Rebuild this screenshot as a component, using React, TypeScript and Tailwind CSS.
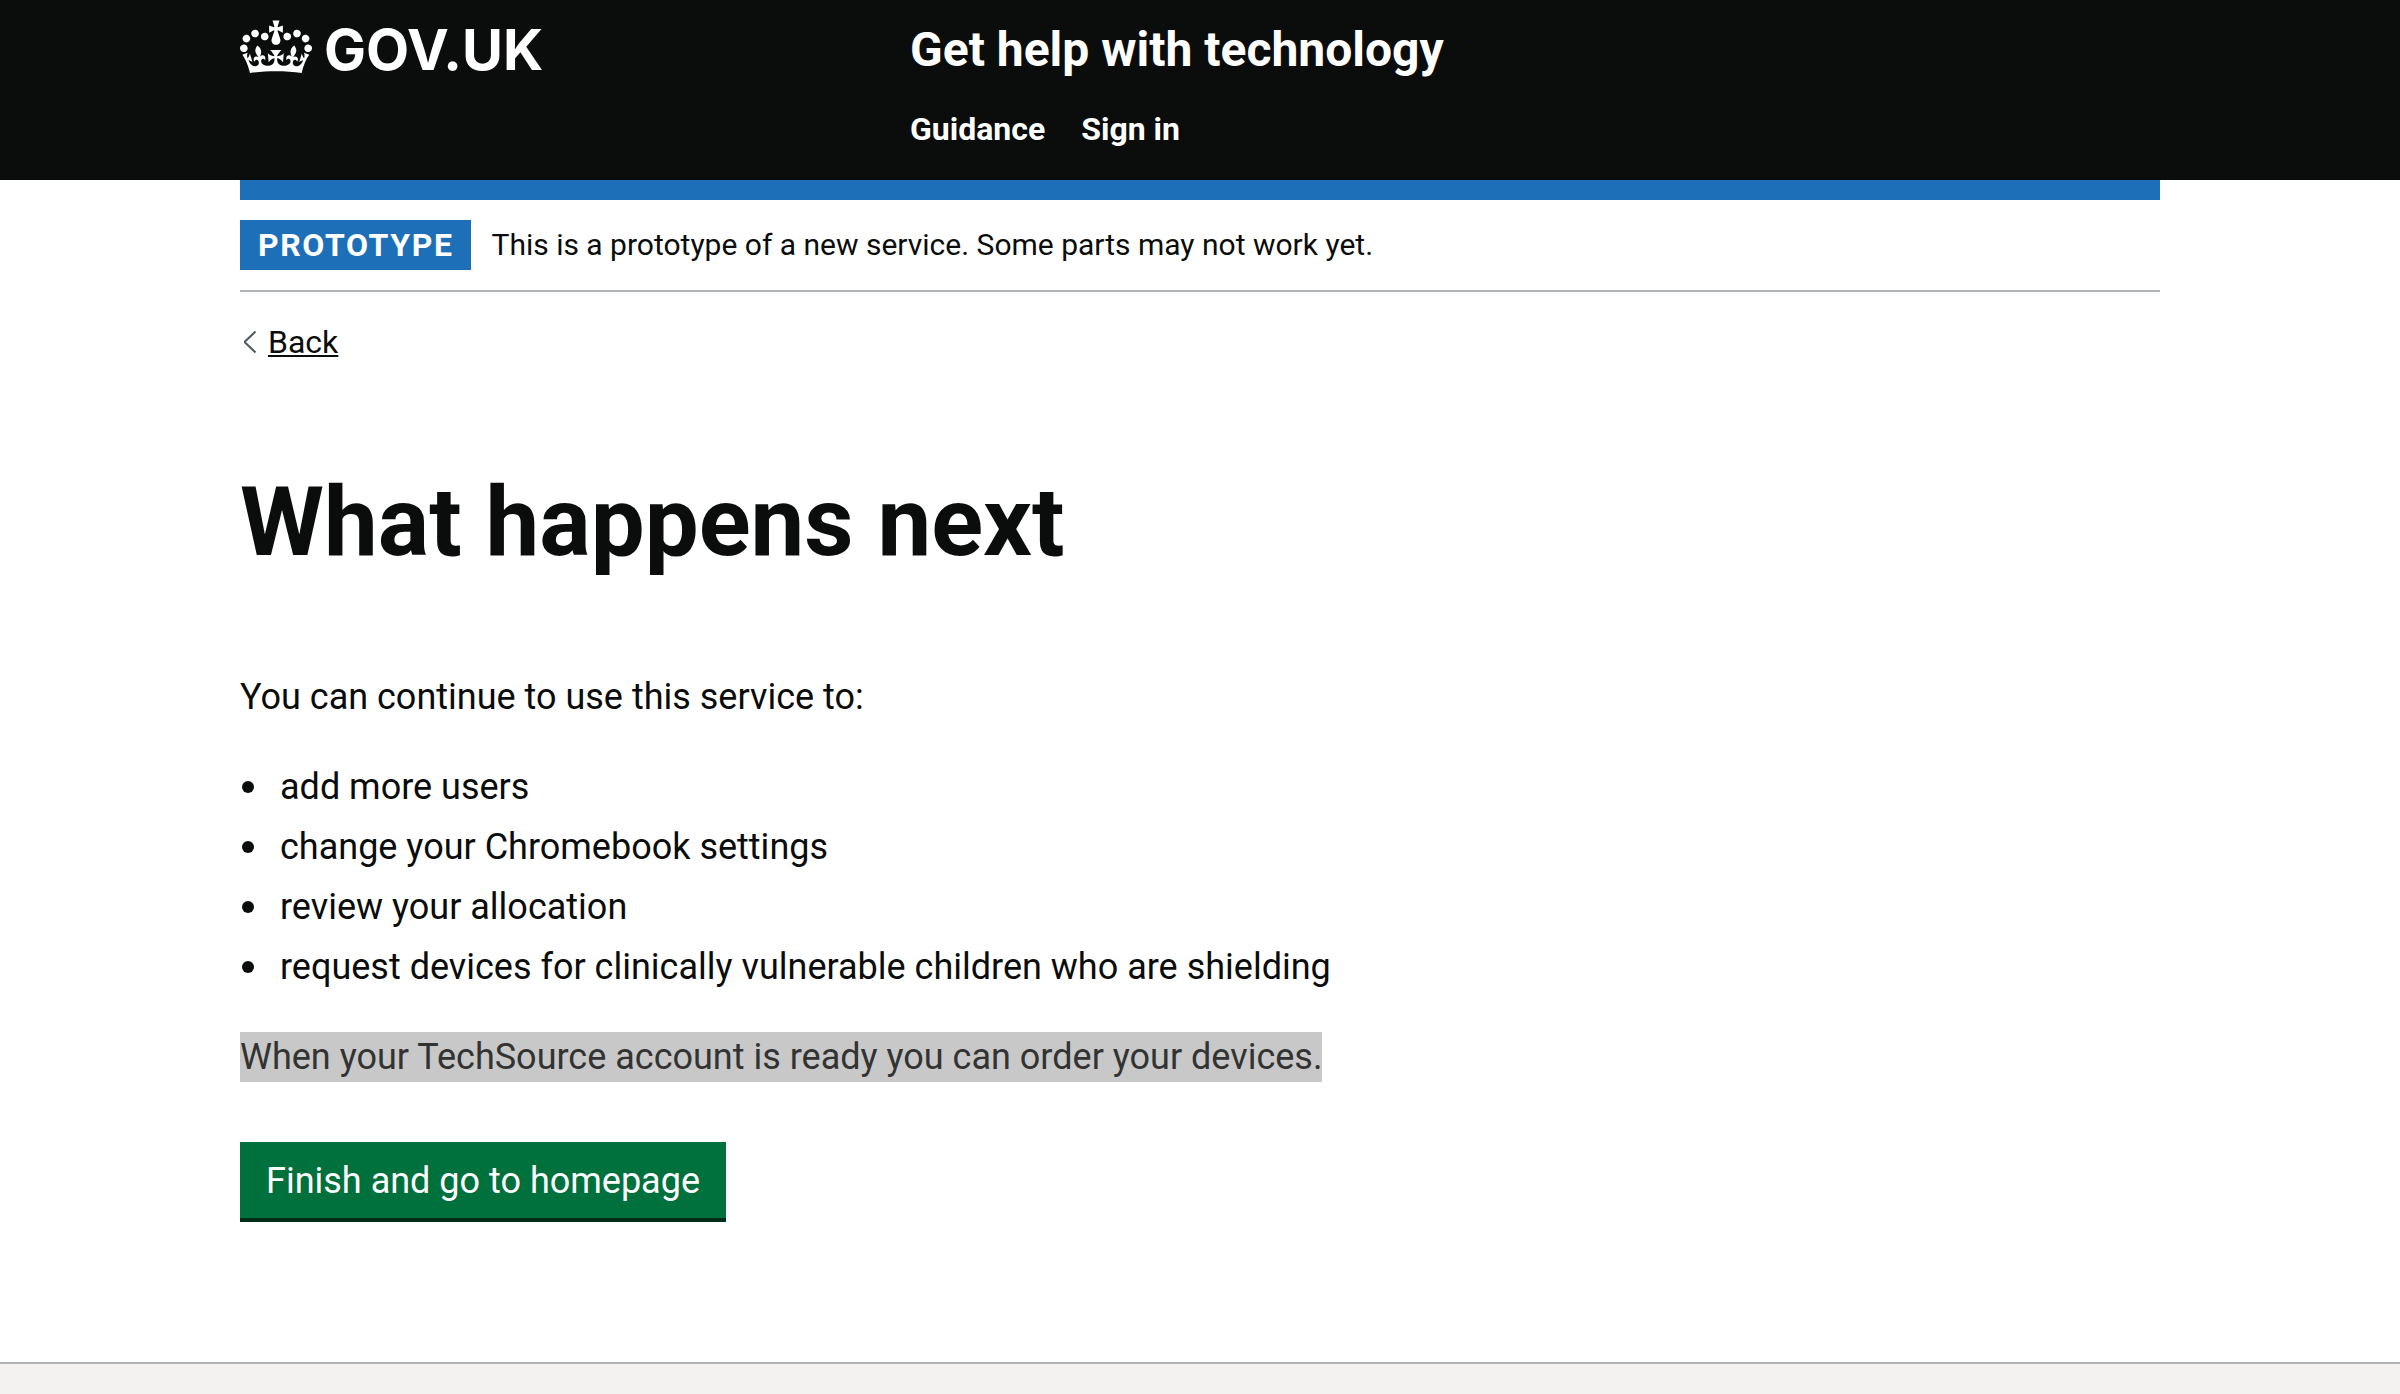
const CROWN =
  'M25 30.2c3.5 1.5 7.7-.2 9.1-3.7 1.5-3.6-.2-7.8-3.9-9.2-3.6-1.4-7.6.3-9.1 3.9-1.4 3.5.3 7.5 3.9 9zM9 39.5c3.6 1.5 7.8-.2 9.2-3.7 1.5-3.6-.2-7.8-3.9-9.1-3.6-1.5-7.6.2-9.1 3.8-1.4 3.5.3 7.5 3.8 9zM4.4 57.2c3.5 1.5 7.7-.2 9.1-3.8 1.5-3.6-.2-7.7-3.9-9.1-3.5-1.5-7.6.3-9.1 3.8-1.4 3.5.3 7.6 3.9 9.1zm38.3-21.4c3.5 1.5 7.7-.2 9.1-3.8 1.5-3.6-.2-7.7-3.9-9.1-3.6-1.5-7.6.3-9.1 3.8-1.3 3.6.4 7.7 3.9 9.1zm64.4-5.6c-3.6 1.5-7.8-.2-9.1-3.7-1.5-3.6.2-7.8 3.8-9.2 3.6-1.4 7.7.3 9.2 3.9 1.3 3.5-.4 7.5-3.9 9zm15.9 9.3c-3.6 1.5-7.7-.2-9.1-3.7-1.5-3.6.2-7.8 3.7-9.1 3.6-1.5 7.7.2 9.2 3.8 1.5 3.5-.3 7.5-3.8 9zm4.7 17.7c-3.6 1.5-7.8-.2-9.2-3.8-1.5-3.6.2-7.7 3.9-9.1 3.6-1.5 7.7.3 9.2 3.8 1.3 3.5-.4 7.6-3.9 9.1zM89.3 35.8c-3.6 1.5-7.8-.2-9.2-3.8-1.4-3.6.2-7.7 3.9-9.1 3.6-1.5 7.7.3 9.2 3.8 1.4 3.6-.3 7.7-3.9 9.1zM69.7 17.7l8.9 4.7V9.3l-8.9 2.8c-.2-.3-.5-.6-.9-.9L72.4 0H59.6l3.5 11.2c-.3.3-.6.5-.9.9l-8.8-2.8v13.1l8.8-4.7c.3.3.6.7.9.9l-5 15.4v.1c-.2.8-.4 1.6-.4 2.4 0 4.1 3.1 7.5 7 8.1h.2c.3 0 .7.1 1 .1.4 0 .7 0 1-.1h.2c4-.6 7.1-4.1 7.1-8.1 0-.8-.1-1.7-.4-2.4V34l-5.1-15.4c.4-.2.7-.6 1-.9zM66 92.8c16.9 0 32.8 1.1 47.1 3.2 4-16.9 8.9-26.7 14-33.5l-9.6-3.4c1 4.9 1.1 7.2 0 10.2-1.5-1.4-3-4.3-4.2-8.7L108.6 76c2.8-2 5-3.2 7.5-3.3-4.4 9.4-10 11.9-13.6 11.2-4.3-.8-6.3-4.6-5.6-7.9 1-4.7 5.7-5.9 8-.5 4.3-8.7-3-11.4-7.6-8.8 7.1-7.2 7.9-13.5 2.1-21.1-8 6.1-8.1 12.3-4.5 20.8-4.7-5.4-12.1-2.5-9.5 6.2 3.4-5.2 7.9-2 7.2 3.1-.6 4.3-6.4 7.8-13.5 7.2-10.3-.9-10.9-8-11.2-13.8 2.5-.5 7.1 1.8 11 7.3L80.2 60c-4.1 4.4-8 5.3-12.3 5.4 1.4-4.4 8-11.6 8-11.6H55.5s6.4 7.2 7.9 11.6c-4.2-.1-8-1-12.3-5.4l1.4 16.4c3.9-5.5 8.5-7.7 10.9-7.3-.3 5.8-.9 12.8-11.1 13.8-7.2.6-12.9-2.9-13.5-7.2-.7-5 3.8-8.3 7.1-3.1 2.7-8.7-4.6-11.6-9.4-6.2 3.7-8.5 3.6-14.7-4.6-20.8-5.8 7.6-5 13.9 2.2 21.1-4.7-2.6-11.9.1-7.7 8.8 2.3-5.5 7.1-4.2 8.1.5.7 3.3-1.3 7.1-5.7 7.9-3.5.7-9-1.8-13.5-11.2 2.5.1 4.7 1.3 7.5 3.3l-4.7-15.4c-1.2 4.4-2.7 7.2-4.3 8.7-1.1-3-.9-5.3 0-10.2l-9.5 3.4c5 6.9 9.9 16.7 14 33.5 14.8-2.1 30.8-3.2 47.7-3.2z'

const CONTAINER = 'mx-auto w-full max-w-[1920px]'

const actions = [
  'add more users',
  'change your Chromebook settings',
  'review your allocation',
  'request devices for clinically vulnerable children who are shielding',
]

function Header() {
  return (
    <header className="bg-[#0b0c0c] text-white">
      <div className={`${CONTAINER} flex items-start pt-5 pb-[31px]`}>
        <div className="w-[670px] shrink-0">
          <a href="#" className="inline-flex items-start gap-3">
            <svg viewBox="0 0 132 97" className="h-[54px] w-[72px]" fill="currentColor" aria-hidden="true">
              <path fillRule="evenodd" d={CROWN} />
            </svg>
            <span className="font-['Inter',sans-serif] text-[56px] leading-[60px] font-bold">GOV.UK</span>
          </a>
        </div>
        <div className="flex flex-col gap-[29px] font-bold">
          <a href="#" className="text-[48px] leading-[60px]">
            Get help with technology
          </a>
          <nav aria-label="Main" className="flex gap-9 text-[32px] leading-[40px]">
            <a href="#">Guidance</a>
            <a href="#">Sign in</a>
          </nav>
        </div>
      </div>
    </header>
  )
}

function PhaseBanner() {
  return (
    <div className="flex items-center gap-5 border-b-2 border-[#b1b4b6] py-5 leading-[50px]">
      <strong className="bg-[#1d70b8] px-[18px] text-[32px] font-bold tracking-wider text-white uppercase">
        Prototype
      </strong>
      <span className="text-[30px]">This is a prototype of a new service. Some parts may not work yet.</span>
    </div>
  )
}

export default function App() {
  return (
    <div className="flex min-h-screen flex-col bg-white font-['Roboto',sans-serif] text-[#0b0c0c]">
      <Header />
      <div className={`${CONTAINER} pb-[140px]`}>
        <div className="h-5 bg-[#1d70b8]" />
        <PhaseBanner />
        <a href="#" className="mt-[30px] inline-flex items-center gap-3 pl-1 text-[32px] leading-[40px]">
          <svg viewBox="0 0 12 22" className="h-[22px] w-3" fill="none" stroke="#505a5f" strokeWidth="2" aria-hidden="true">
            <path d="M11.5 0.5L0.5 11l11 10.5" />
          </svg>
          <span className="underline decoration-2 underline-offset-2">Back</span>
        </a>
        <main className="mt-[110px] text-[36px] leading-[50px]">
          <h1 className="text-[96px] leading-[100px] font-bold">What happens next</h1>
          <p className="mt-[100px]">You can continue to use this service to:</p>
          <ul className="mt-10 flex flex-col gap-[10px]">
            {actions.map((action) => (
              <li key={action} className="flex items-center gap-[26px] pl-[2px]">
                <span className="size-3 shrink-0 rounded-full bg-[#0b0c0c]" />
                {action}
              </li>
            ))}
          </ul>
          <p className="mt-10">
            <span className="inline-block bg-[#c8c8c8] text-[#323333]">
              When your TechSource account is ready you can order your devices.
            </span>
          </p>
          <button
            type="button"
            className="mt-[60px] block border-b-4 border-[#002d18] bg-[#00703c] px-[26px] pt-[14px] pb-3 text-white"
          >
            Finish and go to homepage
          </button>
        </main>
      </div>
      <footer className="grow border-t-2 border-[#b1b4b6] bg-[#f3f2f1]" />
    </div>
  )
}
